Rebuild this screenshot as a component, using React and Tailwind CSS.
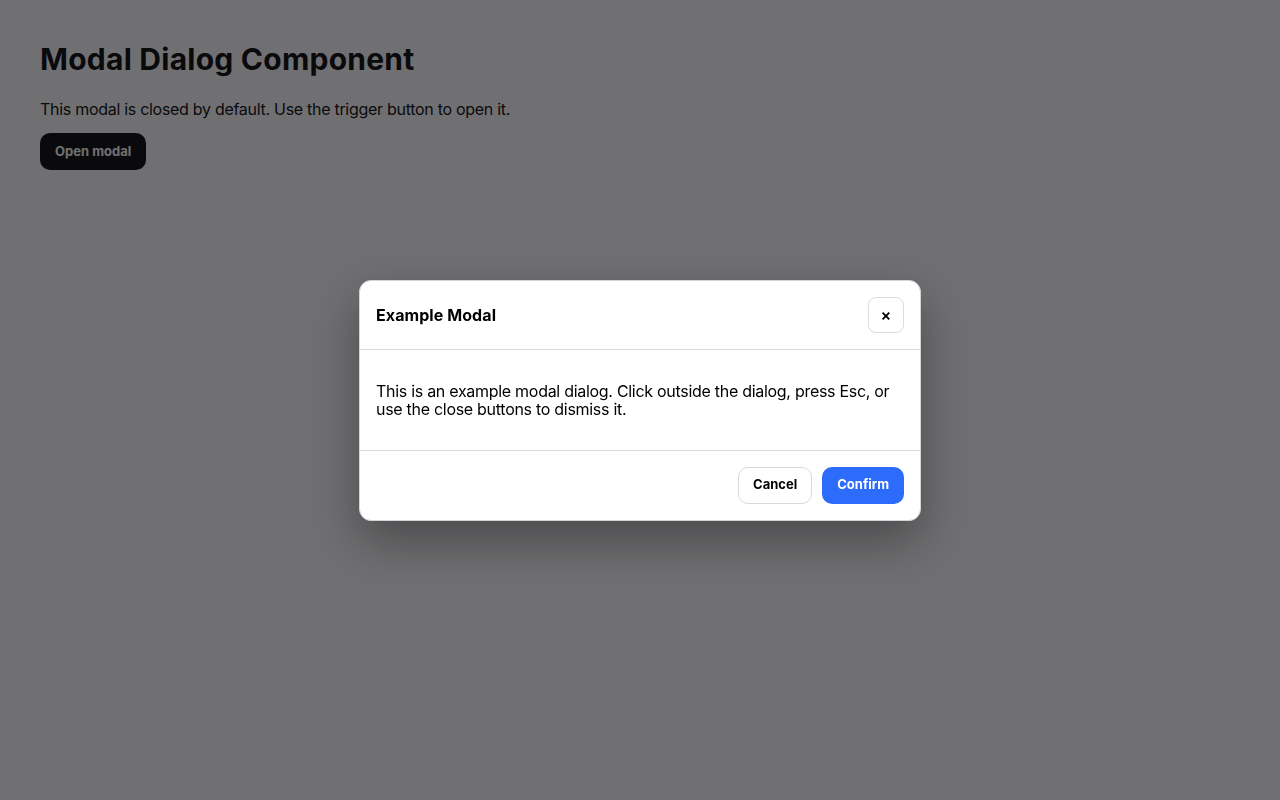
import React from 'react';

const font = { fontFamily: 'Inter, "Noto Sans", sans-serif' };

const Modal = () => (
  <div className="fixed inset-0 flex items-center justify-center bg-[rgba(17,17,20,0.6)]">
    <div className="w-[562px] bg-white border border-[#d4d4d8] rounded-xl shadow-[0_20px_50px_rgba(0,0,0,0.35)] overflow-hidden">
      <div className="flex items-center justify-between px-4 h-[69px] border-b border-[#d9d9dc]">
        <h2 className="text-base font-bold text-black tracking-[0.005em]">Example Modal</h2>
        <button className="w-9 h-9 flex items-center justify-center rounded-lg border border-[#dcdce0] text-black text-base font-semibold">
          ×
        </button>
      </div>
      <div className="px-4 py-8 border-b border-[#d9d9dc]">
        <p className="text-base leading-[18px] text-black tracking-[-0.018em]">
          This is an example modal dialog. Click outside the dialog, press Esc, or use the close buttons to dismiss it.
        </p>
      </div>
      <div className="flex justify-end gap-[10px] p-4">
        <button className="h-[37px] px-[14px] rounded-[10px] border border-[#d9d9dc] bg-white text-[13px] font-bold text-black">
          Cancel
        </button>
        <button className="h-[37px] px-[15px] rounded-[10px] bg-[#2d6bfb] text-[13px] font-bold text-white">
          Confirm
        </button>
      </div>
    </div>
  </div>
);

export default function App() {
  return (
    <div className="min-h-screen bg-white p-10" style={font}>
      <h1 className="text-3xl font-bold text-black leading-9 tracking-[0.008em] pt-[1px]">Modal Dialog Component</h1>
      <p className="mt-5 text-base text-black tracking-[-0.018em]">
        This modal is closed by default. Use the trigger button to open it.
      </p>
      <button className="mt-3 h-[37px] px-[15px] rounded-[10px] bg-black text-[13px] font-bold text-white">
        Open modal
      </button>
      <Modal />
    </div>
  );
}
